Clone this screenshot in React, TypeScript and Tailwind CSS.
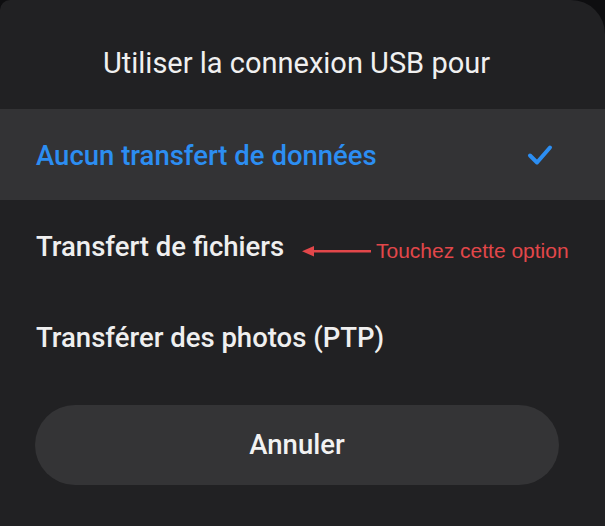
import React from "react";

const options = [
  { label: "Aucun transfert de données", selected: true },
  { label: "Transfert de fichiers", selected: false, hint: true },
  { label: "Transférer des photos (PTP)", selected: false },
];

export default function App() {
  return (
    <div className="w-[605px] h-[526px] bg-[#0e0e10] overflow-hidden">
      <div
        className="h-full bg-[#212123] rounded-tl-[10px] rounded-tr-[34px] flex flex-col"
        style={{ fontFamily: "Roboto, 'Noto Sans', sans-serif" }}
      >
        {/* title */}
        <div className="h-[109px] pt-[17px] pr-[12px] flex items-center justify-center">
          <h1 className="text-[29px] leading-[34px] text-[#f0f0f0]">
            Utiliser la connexion USB pour
          </h1>
        </div>

        {/* options */}
        <div className="flex flex-col">
          {options.map((o) => (
            <div
              key={o.label}
              className={`relative h-[91px] flex items-center justify-between pl-[36px] pr-[52px] ${
                o.selected ? "bg-[#333335]" : ""
              }`}
            >
              <span
                className={`text-[27.5px] leading-[34px] pt-[3px] font-medium ${
                  o.selected ? "text-[#2c8ef2]" : "text-[#efefef]"
                }`}
              >
                {o.label}
              </span>
              {o.selected && (
                <svg width="26" height="22" viewBox="0 0 26 22" fill="none">
                  <path
                    d="M3 11.5 L10 18.5 L23 3.5"
                    stroke="#2c8ef2"
                    strokeWidth="4"
                    strokeLinecap="round"
                    strokeLinejoin="round"
                  />
                </svg>
              )}
              {o.hint && (
                <div className="absolute left-[302px] top-[40px] flex items-center gap-[4px]">
                  <svg width="70" height="12" viewBox="0 0 70 12">
                    <path d="M10 5 H69 V7.5 H10 Z" fill="#e2474a" />
                    <path d="M0 6.25 L12 1 L12 11.5 Z" fill="#e2474a" />
                  </svg>
                  <span
                    className="text-[21px] leading-none text-[#e2474a]"
                    style={{ fontFamily: "'Liberation Sans', Arial, sans-serif" }}
                  >
                    Touchez cette option
                  </span>
                </div>
              )}
            </div>
          ))}
        </div>

        {/* cancel */}
        <button className="mt-[23px] ml-[35px] mr-[46px] h-[80px] rounded-full bg-[#343436] text-[27.5px] font-medium text-[#f2f2f2]">
          Annuler
        </button>
      </div>
    </div>
  );
}
